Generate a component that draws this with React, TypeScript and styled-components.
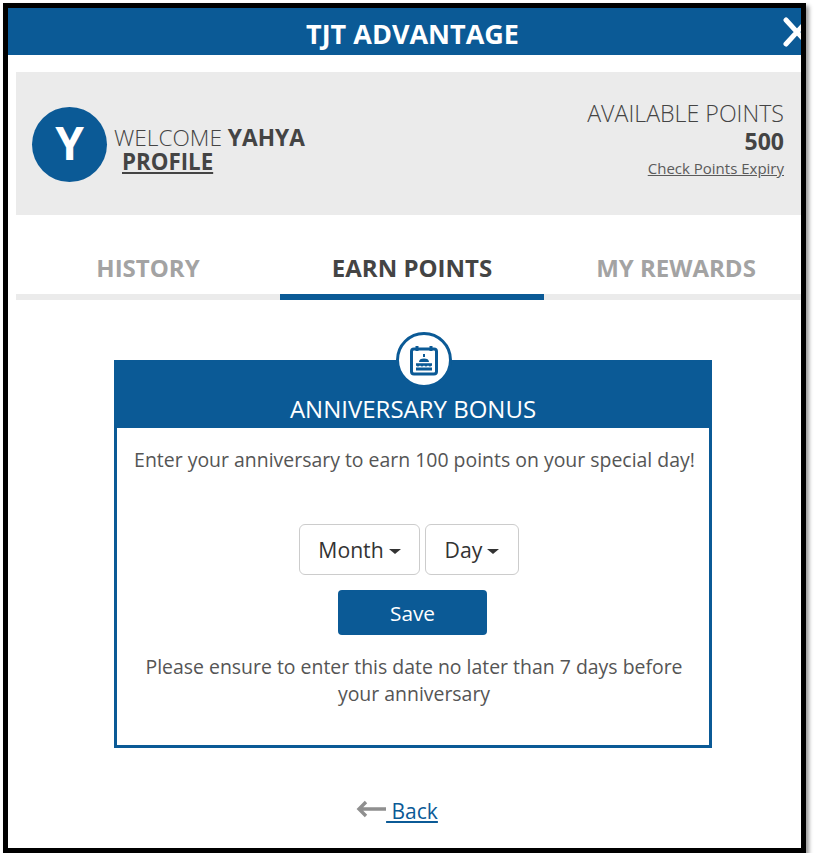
import styled, { createGlobalStyle } from 'styled-components';

const blue = '#0b5a96';
const ink = '#444444';

const Global = createGlobalStyle`
  html, body {
    margin: 0;
    background: #fff;
    font-family: "Open Sans", "Liberation Sans", sans-serif;
  }
  * { box-sizing: border-box; }
`;

const Frame = styled.div`
  width: 803px;
  height: 850px;
  margin: 3px 0 0 3px;
  border: 5px solid #000;
  box-shadow: 3px 3px 4px #9a9a9a;
  background: #fff;
  overflow: hidden;
`;

const TopBar = styled.header`
  position: relative;
  height: 47px;
  background: ${blue};
  color: #fff;
  display: flex;
  align-items: center;
  justify-content: center;
  overflow: hidden;
  padding: 4px 0 0 16px;
  font-size: 27px;
  font-weight: 700;
`;

const CloseIcon = styled.svg`
  position: absolute;
  left: 774px;
  top: 9px;
  width: 30px;
  height: 30px;
`;

const Welcome = styled.section`
  height: 143px;
  margin: 17px 0 0 8px;
  padding: 0 17px 0 16px;
  background: #ebebeb;
  display: flex;
  justify-content: space-between;
  align-items: center;
`;

const UserSide = styled.div`
  display: flex;
  align-items: center;
  gap: 7px;
  padding-top: 2px;
`;

const Avatar = styled.div`
  width: 75px;
  height: 75px;
  border-radius: 50%;
  background: ${blue};
  color: #fff;
  font-size: 46px;
  font-weight: 700;
  display: flex;
  align-items: center;
  justify-content: center;
  padding-bottom: 5px;
`;

const UserText = styled.div`
  color: ${ink};
  font-size: 22.7px;
  line-height: 24px;
  font-weight: 300;
  padding-top: 10px;

  b { font-weight: 700; }
`;

const ProfileLink = styled.a`
  display: block;
  margin-left: 8px;
  font-size: 22.3px;
  font-weight: 700;
  color: ${ink};
  text-decoration: underline;
`;

const PointsSide = styled.div`
  text-align: right;
  color: ${ink};
  padding-bottom: 7px;
`;

const PointsLabel = styled.div`
  font-size: 23.2px;
  line-height: 29px;
  font-weight: 300;
`;

const PointsValue = styled.div`
  font-size: 23px;
  line-height: 27px;
  font-weight: 700;
`;

const ExpiryLink = styled.a`
  display: block;
  font-size: 15px;
  line-height: 26px;
  color: #5a5a5a;
  text-decoration: underline;
`;

const Tabs = styled.nav`
  display: grid;
  grid-template-columns: repeat(3, 264px);
  width: 792px;
  margin: 33px 0 0 8px;
`;

const Tab = styled.div<{ $active?: boolean }>`
  height: 52px;
  border-bottom: 6px solid ${({ $active }) => ($active ? blue : '#ebebeb')};
  color: ${({ $active }) => ($active ? ink : '#a3a3a3')};
  font-size: 24px;
  font-weight: 700;
  line-height: 39px;
  text-align: center;
`;

const Card = styled.section`
  position: relative;
  width: 598px;
  height: 388px;
  margin: 60px 0 0 106px;
  border: 3px solid ${blue};
  border-top: 0;
  text-align: center;
`;

const Badge = styled.div`
  position: absolute;
  left: 279px;
  top: -28px;
  width: 56px;
  height: 56px;
  border-radius: 50%;
  background: #fff;
  border: 3px solid ${blue};
  display: flex;
  align-items: center;
  justify-content: center;
`;

const CardTitle = styled.h2`
  height: 68px;
  margin: 0 -3px;
  padding-top: 33px;
  background: ${blue};
  color: #fff;
  font-size: 24px;
  line-height: 32px;
  font-weight: 400;
`;

const Intro = styled.p`
  margin: 18px 0 0;
  padding-left: 3px;
  color: #555;
  font-size: 19.45px;
  line-height: 28px;
  white-space: nowrap;
`;

const Pickers = styled.div`
  display: flex;
  justify-content: center;
  gap: 5px;
  margin: 50px 8px 0 0;
`;

const Picker = styled.button<{ $w: number }>`
  width: ${({ $w }) => $w}px;
  height: 51px;
  border: 1px solid #ccc;
  border-radius: 6px;
  background: #fff;
  color: #333;
  font: 400 21.2px "Open Sans", sans-serif;
  display: flex;
  align-items: center;
  justify-content: center;
  gap: 5px;
  padding: 0;
`;

const Caret = styled.span`
  width: 0;
  height: 0;
  margin-top: 3px;
  border-top: 5px solid #333;
  border-left: 6px solid transparent;
  border-right: 6px solid transparent;
`;

const SaveButton = styled.button`
  display: block;
  width: 149px;
  height: 45px;
  margin: 15px 0 0 221px;
  border: 0;
  border-radius: 4px;
  background: ${blue};
  color: #fff;
  font: 400 20.8px "Open Sans", sans-serif;
`;

const Note = styled.p`
  width: 560px;
  margin: 18px 0 0 17px;
  color: #555;
  font-size: 19.45px;
  line-height: 27px;
`;

const BackRow = styled.div`
  display: flex;
  justify-content: center;
  align-items: center;
  margin-top: 48px;
  padding-right: 13px;
  line-height: 30px;
`;

const BackArrow = styled.svg`
  margin: 0 0 4px -2px;
`;

const BackLink = styled.a`
  color: ${blue};
  font-size: 21px;
  text-decoration: underline;
  white-space: pre;
`;

function CalendarCake() {
  return (
    <svg width="30" height="32" viewBox="0 0 30 32" fill="none">
      <rect x="2.5" y="5" width="25" height="25" rx="2.5" stroke={blue} strokeWidth="3" />
      <path d="M8 2v5M22 2v5" stroke={blue} strokeWidth="3" />
      <path d="M15 10v3" stroke={blue} strokeWidth="2" />
      <path d="M10 18c0-2.5 2-3.5 5-3.5s5 1 5 3.5z" fill={blue} />
      <path d="M7 19.2h16v2.4c-1.3 1.3-2.7 1.3-4 0-1.3 1.3-2.7 1.3-4 0-1.3 1.3-2.7 1.3-4 0-1.3 1.3-2.7 1.3-4 0z" fill={blue} />
      <rect x="7" y="23.5" width="16" height="3" fill={blue} />
    </svg>
  );
}

export default function App() {
  return (
    <>
      <Global />
      <Frame>
        <TopBar>
          TJT ADVANTAGE
          <CloseIcon viewBox="0 0 30 30">
            <path d="M4 3l22 24M26 3L4 27" stroke="#fff" strokeWidth="5" strokeLinecap="round" />
          </CloseIcon>
        </TopBar>

        <Welcome>
          <UserSide>
            <Avatar>Y</Avatar>
            <UserText>
              WELCOME <b>YAHYA</b>
              <ProfileLink href="#profile">PROFILE</ProfileLink>
            </UserText>
          </UserSide>
          <PointsSide>
            <PointsLabel>AVAILABLE POINTS</PointsLabel>
            <PointsValue>500</PointsValue>
            <ExpiryLink href="#expiry">Check Points Expiry</ExpiryLink>
          </PointsSide>
        </Welcome>

        <Tabs>
          <Tab>HISTORY</Tab>
          <Tab $active>EARN POINTS</Tab>
          <Tab>MY REWARDS</Tab>
        </Tabs>

        <Card>
          <Badge>
            <CalendarCake />
          </Badge>
          <CardTitle>ANNIVERSARY BONUS</CardTitle>
          <Intro>Enter your anniversary to earn 100 points on your special day!</Intro>
          <Pickers>
            <Picker $w={121}>
              Month <Caret />
            </Picker>
            <Picker $w={94}>
              Day <Caret />
            </Picker>
          </Pickers>
          <SaveButton>Save</SaveButton>
          <Note>Please ensure to enter this date no later than 7 days before your anniversary</Note>
        </Card>

        <BackRow>
          <BackArrow width="30" height="18" viewBox="0 0 30 18" fill="none">
            <path d="M30 9H3M10 2L3 9l7 7" stroke="#8f8f8f" strokeWidth="3.4" />
          </BackArrow>
          <BackLink href="#back"> Back</BackLink>
        </BackRow>
      </Frame>
    </>
  );
}
